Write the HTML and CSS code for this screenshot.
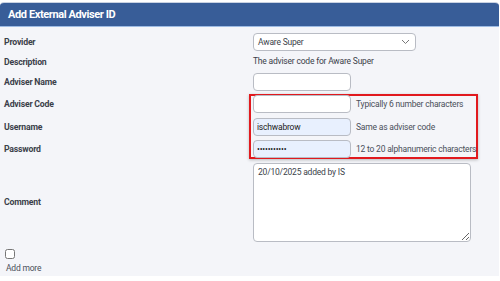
FILE: index.html
```html
<!DOCTYPE html>
<html lang="en">
<head>
    <meta charset="UTF-8">
    <meta name="viewport" content="width=device-width, initial-scale=1.0">
    <title>Add External Adviser ID</title>
    <link rel="stylesheet" href="styles.css">
</head>
<body>
    <div class="panel">
        <div class="panel-header">Add External Adviser ID</div>
        <div class="panel-body">
            <div class="form-grid">
                <label class="label">Provider</label>
                <div class="select">
                    <span>Aware Super</span>
                    <svg width="9" height="6" viewBox="0 0 9 6"><path d="M1 1l3.5 3.5L8 1" fill="none" stroke="#777" stroke-width="1"/></svg>
                </div>

                <label class="label">Description</label>
                <div class="text">The adviser code for Aware Super</div>

                <label class="label">Adviser Name</label>
                <div class="field"><input class="input" type="text"></div>

                <!-- highlight around the login fields -->
                <div class="highlight"></div>

                <label class="label row-code">Adviser Code</label>
                <div class="field row-code"><input class="input" type="text"><span class="hint">Typically 6 number characters</span></div>

                <label class="label row-user">Username</label>
                <div class="field row-user"><input class="input filled" type="text" value="ischwabrow"><span class="hint">Same as adviser code</span></div>

                <label class="label row-pass">Password</label>
                <div class="field row-pass"><input class="input filled" type="password" value="ischwabrow1"><span class="hint">12 to 20 alphanumeric characters</span></div>

                <label class="label">Comment</label>
                <textarea class="comment">20/10/2025 added by IS</textarea>
            </div>

            <div class="add-more">
                <input type="checkbox" class="check">
                <div class="add-more-label">Add more</div>
            </div>
        </div>
    </div>
</body>
</html>
```

FILE: styles.css
```css
body {
    margin: 0;
    padding-top: 2px;
    background: #fff;
    font-family: Roboto, "Liberation Sans", sans-serif;
    color: #3b3f4a;
    letter-spacing: -0.2px;
}
.panel {
    background: #f4f5f9;
    border-top: 1px solid #c9d2e2;
    border-radius: 4px 4px 0 0;
    height: 273px;
    margin-right: 1px;
    overflow: hidden;
}
.panel-header {
    background: #385d98;
    color: #fff;
    font-weight: bold;
    font-size: 11px;
    letter-spacing: -0.4px;
    height: 23px;
    line-height: 23px;
    padding-left: 8px;
    border-bottom: 1px solid #9dbbe3;
}
.panel-body {
    padding: 0 4px;
}
.form-grid {
    display: grid;
    grid-template-columns: 249px 1fr;
    row-gap: 4.5px;
    padding-top: 5.5px;
    align-items: center;
}
.label {
    font-weight: bold;
    font-size: 8.7px;
    grid-column: 1;
}
.row-code { grid-row: 4; }
.row-user { grid-row: 5; }
.row-pass { grid-row: 6; }
.select {
    grid-column: 2;
    width: 163px;
    height: 18px;
    box-sizing: border-box;
    border: 1px solid #b9bcc4;
    border-radius: 4px;
    background: #fff;
    display: flex;
    align-items: center;
    justify-content: space-between;
    padding: 0 5px 0 4px;
    font-size: 8.5px;
}
.text {
    grid-column: 2;
    font-size: 8.5px;
    height: 13px;
    line-height: 13px;
}
.field {
    grid-column: 2;
    display: flex;
    align-items: center;
    gap: 5px;
    position: relative;
}
.input {
    width: 98px;
    height: 18px;
    box-sizing: border-box;
    margin: 0;
    border: 1px solid #b9bcc4;
    border-radius: 4px;
    background: #fff;
    font-family: inherit;
    font-size: 8.5px;
    letter-spacing: -0.2px;
    color: #222;
    padding: 0 3px;
}
.input.filled {
    background: #e8f0fe;
}
.hint {
    font-size: 8.5px;
    color: #4a4f5a;
}
.highlight {
    grid-column: 2;
    grid-row: 4 / 7;
    align-self: stretch;
    width: 229px;
    margin: -1px 0 -1px -4px;
    box-sizing: border-box;
    border: 2px solid #e1191e;
    box-shadow: 0 1px 3px rgba(0, 0, 0, 0.25);
}
.comment {
    grid-column: 2;
    display: block;
    width: 218px;
    height: 79px;
    box-sizing: border-box;
    margin: 0;
    border: 1px solid #b9bcc4;
    border-radius: 4px;
    background: #fff;
    font-family: inherit;
    font-size: 8.5px;
    letter-spacing: -0.2px;
    color: #3b3f4a;
    padding: 3px 4px;
    resize: vertical;
}
.add-more {
    padding: 7px 0 0 1px;
}
.check {
    display: block;
    margin: 0;
    width: 10px;
    height: 10px;
}
.add-more-label {
    font-size: 8.5px;
    color: #4a4f5a;
    margin-top: 4px;
    padding-left: 1px;
}
```
